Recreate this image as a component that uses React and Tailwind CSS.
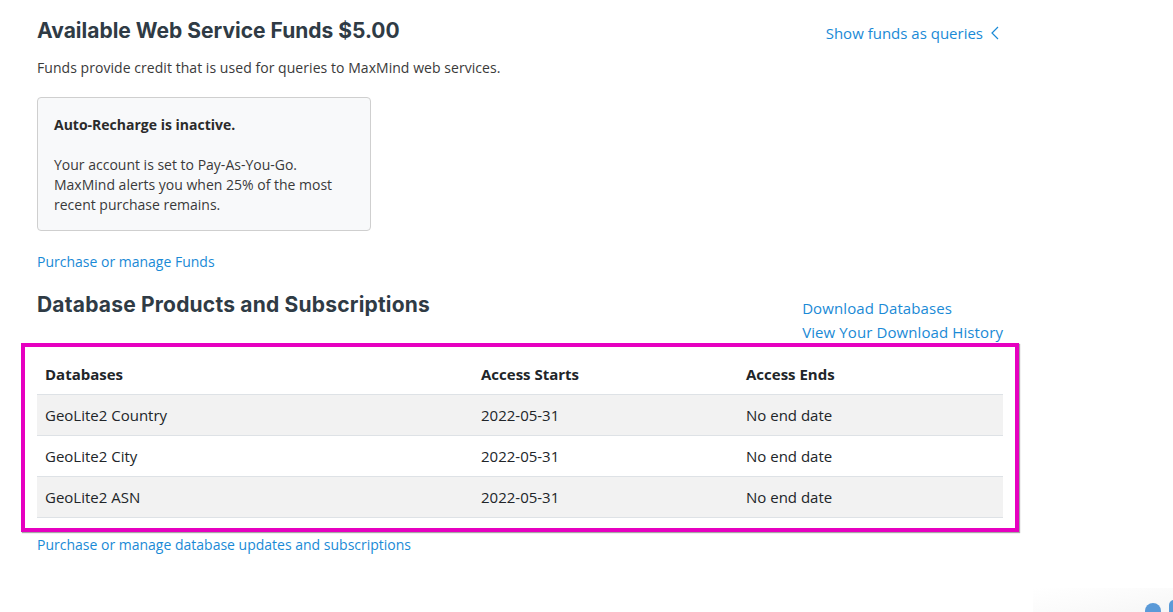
import React from "react";

const body = { fontFamily: '"Open Sans", "Noto Sans", sans-serif' };
const head = { fontFamily: 'Inter, "Open Sans", sans-serif' };

const rows = [
  ["GeoLite2 Country", "2022-05-31", "No end date"],
  ["GeoLite2 City", "2022-05-31", "No end date"],
  ["GeoLite2 ASN", "2022-05-31", "No end date"],
];

export default function App() {
  return (
    <div className="relative w-[1173px] h-[612px] overflow-hidden bg-white" style={body}>
      <div className="pl-[37px] w-[1003px] pt-[18px]">
        <div className="flex justify-between items-start">
          <h1 className="text-[21px] leading-[26px] font-bold text-[#2f3b45]" style={head}>
            Available Web Service Funds $5.00
          </h1>
          <a className="flex items-center gap-[8px] mt-[3px] mr-[4px] text-[15px] leading-[24px] text-[#1a8ad6]">
            Show funds as queries
            <svg width="8" height="14" viewBox="0 0 8 14" fill="none" stroke="#1a8ad6" strokeWidth="1.2">
              <polyline points="7,1 1,7 7,13" />
            </svg>
          </a>
        </div>
        <p className="mt-[13px] text-[14px] leading-[20px] text-[#3a3a3a] tracking-[0.05px]">
          Funds provide credit that is used for queries to MaxMind web services.
        </p>
        <div className="mt-[19px] w-[334px] h-[134px] rounded-[4px] border border-[#cfcfcf] bg-[#f8f9fa] px-[16px] pt-[17px] text-[14px] leading-[20px] text-[#3a3a3a]">
          <p className="font-bold text-[#2b2b2b]">Auto-Recharge is inactive.</p>
          <p className="mt-[20px]">
            Your account is set to Pay-As-You-Go.
            <br />
            MaxMind alerts you when 25% of the most
            <br />
            recent purchase remains.
          </p>
        </div>
        <a className="block mt-[20px] text-[14px] leading-[22px] text-[#1a8ad6]">Purchase or manage Funds</a>
        <div className="flex justify-between items-start mt-[19px]">
          <h2 className="text-[21px] leading-[26px] font-bold text-[#2f3b45] tracking-[0.2px]" style={head}>
            Database Products and Subscriptions
          </h2>
          <div className="flex flex-col mt-[4px] text-[15px] leading-[24px] text-[#1a8ad6] tracking-[0.1px]">
            <a>Download Databases</a>
            <a>View Your Download History</a>
          </div>
        </div>
        <div className="-mx-[16px] mt-[-1px] border-[4px] border-[#e600c0] pt-[7px] pb-[10px] px-[12px] shadow-[1px_1px_1px_rgba(0,0,0,0.35)]">
          <table className="w-full border-collapse text-[15px] text-[#212529]">
            <thead>
              <tr className="h-[40px] border-b border-[#dee2e6]">
                <th className="w-[436px] text-left font-bold px-[8px] pt-[1px]">Databases</th>
                <th className="w-[265px] text-left font-bold px-[8px] pt-[1px]">Access Starts</th>
                <th className="text-left font-bold px-[8px] pt-[1px]">Access Ends</th>
              </tr>
            </thead>
            <tbody>
              {rows.map((r, i) => (
                <tr
                  key={i}
                  className={`h-[41px] border-b border-[#dee2e6] ${i % 2 === 0 ? "bg-[#f2f2f2]" : "bg-white"}`}
                >
                  {r.map((c, j) => (
                    <td key={j} className="px-[8px] pt-[2px]">{c}</td>
                  ))}
                </tr>
              ))}
            </tbody>
          </table>
        </div>
        <a className="block mt-[2px] text-[14px] leading-[22px] text-[#1a8ad6]">
          Purchase or manage database updates and subscriptions
        </a>
      </div>
      <div className="absolute right-0 bottom-0 w-[140px] h-[24px] bg-gradient-to-tl from-[#f6f6f6] via-[#fbfbfb] to-white" />
      <div className="absolute left-[1145px] top-[603px] w-[16px] h-[16px] rounded-full bg-[#5a9ad8]" />
      <div className="absolute left-[1169px] top-[600px] w-[10px] h-[20px] rounded-full bg-[#5a9ad8]" />
    </div>
  );
}
